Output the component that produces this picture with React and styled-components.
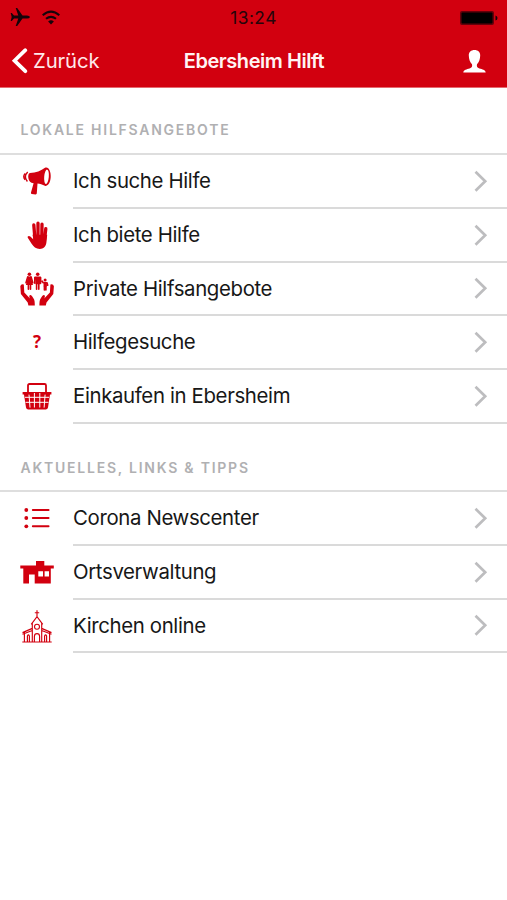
import React from 'react';
import styled, { createGlobalStyle } from 'styled-components';

const RED = '#d2000f';

const GlobalStyle = createGlobalStyle`
  * { box-sizing: border-box; }
  body {
    margin: 0;
    background: #fff;
    font-family: Inter, 'Liberation Sans', sans-serif;
    overflow: hidden;
  }
  svg { display: block; flex: none; }
`;

const Screen = styled.main`
  width: 507px;
  height: 900px;
  background: #fff;
`;

const Header = styled.header`
  height: 88px;
  background: ${RED};
  border-bottom: 1px solid #e56a70;
`;

const StatusBar = styled.div`
  display: grid;
  grid-template-columns: 1fr auto 1fr;
  align-items: center;
  height: 35px;
  padding: 0 9px 0 10px;
`;

const Signals = styled.div`
  display: flex;
  align-items: center;
  gap: 11px;
  padding-bottom: 1px;
`;

const Clock = styled.time`
  margin-right: 1px;
  font-size: 17.3px;
  line-height: 20px;
  letter-spacing: 0.5px;
  color: #26050a;
`;

const BatterySlot = styled.div`
  display: flex;
  justify-content: flex-end;
`;

const NavBar = styled.nav`
  display: grid;
  grid-template-columns: 1fr auto 1fr;
  align-items: center;
  height: 52px;
  padding: 0 21px 0 11px;
  color: #fff;
`;

const BackButton = styled.button`
  display: flex;
  align-items: center;
  gap: 5px;
  padding: 0;
  border: 0;
  background: none;
  color: #ffe9ea;
  font: 400 20.3px/24px Inter, sans-serif;
  letter-spacing: -0.1px;
`;

const Title = styled.h1`
  margin: 0 0 0 11px;
  font-size: 20px;
  font-weight: 600;
  line-height: 24px;
  letter-spacing: -0.45px;
  white-space: nowrap;
  color: #fff4f4;
`;

const ProfileButton = styled.button`
  justify-self: end;
  padding: 0;
  border: 0;
  background: none;
`;

const SectionTitle = styled.h2`
  margin: 0;
  height: ${(p) => p.$height}px;
  padding: ${(p) => p.$top}px 0 0 20.5px;
  border-bottom: 2px solid #dedede;
  font-size: 14px;
  font-weight: 600;
  line-height: 20px;
  letter-spacing: 1.76px;
  color: #b0b0b2;
`;

const List = styled.ul`
  margin: 0;
  padding: 0;
  list-style: none;
`;

const Row = styled.li`
  display: flex;
  align-items: center;
  height: 53.75px;
  padding-left: 17px;
`;

const IconSlot = styled.div`
  display: flex;
  align-items: center;
  width: 40px;
  padding-bottom: 1.4px;
`;

const RowBody = styled.div`
  display: flex;
  flex: 1;
  align-items: center;
  justify-content: space-between;
  height: 100%;
  margin-left: 16px;
  padding-right: 19px;
  border-bottom: 2px solid #dadada;
`;

const Label = styled.span`
  padding-top: 0.6px;
  font-size: 20.4px;
  line-height: 26px;
  letter-spacing: -0.36px;
  color: #171717;
  white-space: nowrap;
`;

const QuestionMark = styled.span`
  width: 40px;
  text-align: center;
  font: 700 17px/20px 'Open Sans', sans-serif;
  color: ${RED};
`;

const Icon = ({ children }) => (
  <svg width="40" height="40" viewBox="0 0 40 40" fill={RED} stroke="none">
    {children}
  </svg>
);

const Megaphone = () => (
  <Icon>
    <path d="M13 12C19 11.8 24 9.6 28 6.7c3.7-1.5 6 3.8 5.7 9.4-.3 5.4-2.8 9.8-5.8 8.6-2.5-1.3-5-2-7.4-2.3l-.7 9.9q0 1.2-1.3 1.1l-3.7-.5q-1.2-.2-.8-1.4l2.6-9.2c-5.9.1-6.7-9.9-3.6-10.3z" />
    <ellipse cx="29.5" cy="15.8" rx="2.3" ry="7.2" fill="#fff" transform="rotate(5 29.5 15.8)" />
    <path d="M10.7 11q-4.4 4.4-.3 9.5M8.2 12.4q-2.8 3-.1 6.4" fill="none" stroke={RED} strokeWidth="1.4" />
  </Icon>
);

const Hand = () => (
  <Icon>
    <path d="M18 24.5 16.8 10M21 23V8.2M24.8 23 25 9.2M27.5 25l1.3-11.3" fill="none" stroke={RED} strokeWidth="3.3" strokeLinecap="round" />
    <path d="M15.5 19.7h14.7l-.7 7c-.4 5-3.2 7.2-6.7 7.2-4 0-6.2-2.1-8.2-5.2l-3.8-5.9c-.8-1.5 1.2-2.5 2.5-1.2l3.2 3z" />
  </Icon>
);

const FamilyHands = () => (
  <Icon>
    <circle cx="12.4" cy="5.2" r="1.8" />
    <circle cx="20.7" cy="5.2" r="1.8" />
    <circle cx="28.1" cy="10.9" r="1.5" />
    <path d="m10.8 7.7-1.8 6M14 7.7l1.8 6M11.4 15v5.3M13.5 15v5.3M17.8 8.5v5.8M23.6 8.5v5.8M19.6 14v6.3M21.8 14v6.3M26.2 13.7l-1-1.5M30 13.7l.7 2.5M27.4 17v4M28.9 17v4" fill="none" stroke={RED} strokeWidth="1.6" strokeLinecap="round" />
    <path d="M11 7.4h2.8l2.2 8.6H8.9zM17.7 7.5h6v7.7h-5zM26.3 12.9h3.6v4.6h-3.2z" />
    <path id="palm" d="M3.3 17.2Q4 14.5 6.8 15.4l.5 8.1 5.7 5.9q-1.5-2.9.1-3.5 1.5-.3 3.9 4.3.8 1.5.8 6.4h-6.4l-.7-3.2-6.8-8.5z" />
    <use href="#palm" transform="matrix(-1 0 0 1 40.2 0)" />
  </Icon>
);

const Basket = () => (
  <Icon>
    <path d="M11 17V9.5Q11 8 12.5 8h15Q29 8 29 9.5V17" fill="none" stroke={RED} strokeWidth="1.8" />
    <path d="M5.6 16h28.8v2.6H33l-2 13q-.2 1.8-2 1.8H11q-1.8 0-2-1.8l-2-13H5.6z" />
    <path d="M8 21.3h24M8.5 26.3h23M12 18.6l1 13M17.4 17v14.5M22.8 17v14.5M28.1 18.6l-1 13" stroke="#fff" strokeWidth="1" />
  </Icon>
);

const Bullets = () => (
  <Icon>
    <circle cx="9.3" cy="12" r="1.9" />
    <circle cx="9.3" cy="20" r="1.9" />
    <circle cx="9.3" cy="28.3" r="1.9" />
    <path d="M15.8 12h15.8M15.8 20h15.8M15.8 28.3h15.8" stroke={RED} strokeWidth="1.9" strokeLinecap="round" />
  </Icon>
);

const TownHall = () => (
  <Icon>
    <path fillRule="evenodd" d="M19 9h8.3v4.6h9.5v2.9h-3v15H17.7v-9H12v9H6.3v-15h-3v-2.9H19zM21.3 19.3v5.2h4.7v-5.2zM27.6 19.3v5.2H32v-5.2z" />
  </Icon>
);

const Church = () => (
  <Icon>
    <path d="M20 4.3v6.3M17.8 6.7h4.4M14.2 18.3 20 10.7l5.8 7.6M15.3 17v19M24.7 17v19M15.3 22.4l-9.8 4.2M24.7 22.4l9.8 4.2M7.4 26.2V36M32.6 26.2V36M5.3 36h29.4M17.4 36v-5.5q0-2.9 2.6-2.9t2.6 2.9V36M10.4 35.5V30q1-2.2 2 0v5.5M27.6 35.5V30q1-2.2 2 0v5.5M5.5 28.2l9.8-3.7M34.5 28.2l-9.8-3.7" fill="none" stroke={RED} strokeWidth="1.15" />
    <circle cx="20" cy="20.7" r="2.5" fill="none" stroke={RED} strokeWidth="1.1" />
  </Icon>
);

const Question = () => <QuestionMark>?</QuestionMark>;

const Chevron = () => (
  <svg width="15" height="24" viewBox="0 0 15 24" fill="none">
    <path d="m2.5 2.8 9.7 9.5-9.7 9.5" stroke="#bdbdbf" strokeWidth="2.7" />
  </svg>
);

const Plane = () => (
  <svg width="20" height="18" viewBox="0 0 20 18" fill="#16040a">
    <path d="M20 9q-.5 1.5-3 1.5h-4.5L7.2 18H5.7l2.6-7.5H4L1.8 13H.7l1-4-1-4h1.1L4 7.5h4.3L5.7 0h1.5l5.3 7.5H17Q19.5 7.5 20 9z" />
  </svg>
);

const Wifi = () => (
  <svg width="20" height="15" viewBox="0 0 20 15">
    <path d="M1.7 5.2Q10-2 18.3 5.2M5 8.8q5-4 10 0" fill="none" stroke="#16040a" strokeWidth="2.1" />
    <path d="m10 14.4-2.9-3q2.9-2.1 5.8 0z" fill="#16040a" />
  </svg>
);

const Battery = () => (
  <svg width="38" height="14" viewBox="0 0 38 14">
    <rect width="34" height="14" rx="2" fill="#65000a" />
    <rect x="1.5" y="1.5" width="31" height="11" rx="1" fill="#000" />
    <path d="M35.5 4.5q2 .5 2 2.5t-2 2.5z" fill="#16040a" />
  </svg>
);

const BackArrow = () => (
  <svg width="17" height="26" viewBox="0 0 17 26">
    <path d="M14.3 2.2 3.5 12.7l10.8 10.5" fill="none" stroke="#fff" strokeWidth="3.7" strokeLinecap="round" />
  </svg>
);

const Person = () => (
  <svg width="23" height="23" viewBox="0 0 23 23">
    <path d="M11.5 0C8 0 5.7 2.1 5.8 5.5c.1 3.6 1.1 6.8 3.2 8.7.5 2.4-.2 3.5-2.4 4.2C3.7 19.3.7 19.5.3 22.5h22.4c-.4-3-3.4-3.2-6.3-4.1-2.2-.7-2.9-1.8-2.4-4.2 2.1-1.9 3.1-5.1 3.2-8.7C17.3 2.1 15 0 11.5 0z" fill="#fff" />
  </svg>
);

const offers = [
  { label: 'Ich suche Hilfe', icon: Megaphone },
  { label: 'Ich biete Hilfe', icon: Hand },
  { label: 'Private Hilfsangebote', icon: FamilyHands },
  { label: 'Hilfegesuche', icon: Question },
  { label: 'Einkaufen in Ebersheim', icon: Basket },
];

const links = [
  { label: 'Corona Newscenter', icon: Bullets },
  { label: 'Ortsverwaltung', icon: TownHall },
  { label: 'Kirchen online', icon: Church },
];

const Menu = ({ items }) => (
  <List>
    {items.map(({ label, icon: Symbol }) => (
      <Row key={label}>
        <IconSlot><Symbol /></IconSlot>
        <RowBody>
          <Label>{label}</Label>
          <Chevron />
        </RowBody>
      </Row>
    ))}
  </List>
);

export default function App() {
  return (
    <Screen>
      <GlobalStyle />
      <Header>
        <StatusBar>
          <Signals><Plane /><Wifi /></Signals>
          <Clock>13:24</Clock>
          <BatterySlot><Battery /></BatterySlot>
        </StatusBar>
        <NavBar>
          <BackButton><BackArrow />Zurück</BackButton>
          <Title>Ebersheim Hilft</Title>
          <ProfileButton aria-label="Profil"><Person /></ProfileButton>
        </NavBar>
      </Header>
      <SectionTitle $height={67} $top={32}>LOKALE HILFSANGEBOTE</SectionTitle>
      <Menu items={offers} />
      <SectionTitle $height={68.25} $top={34}>AKTUELLES, LINKS &amp; TIPPS</SectionTitle>
      <Menu items={links} />
    </Screen>
  );
}
